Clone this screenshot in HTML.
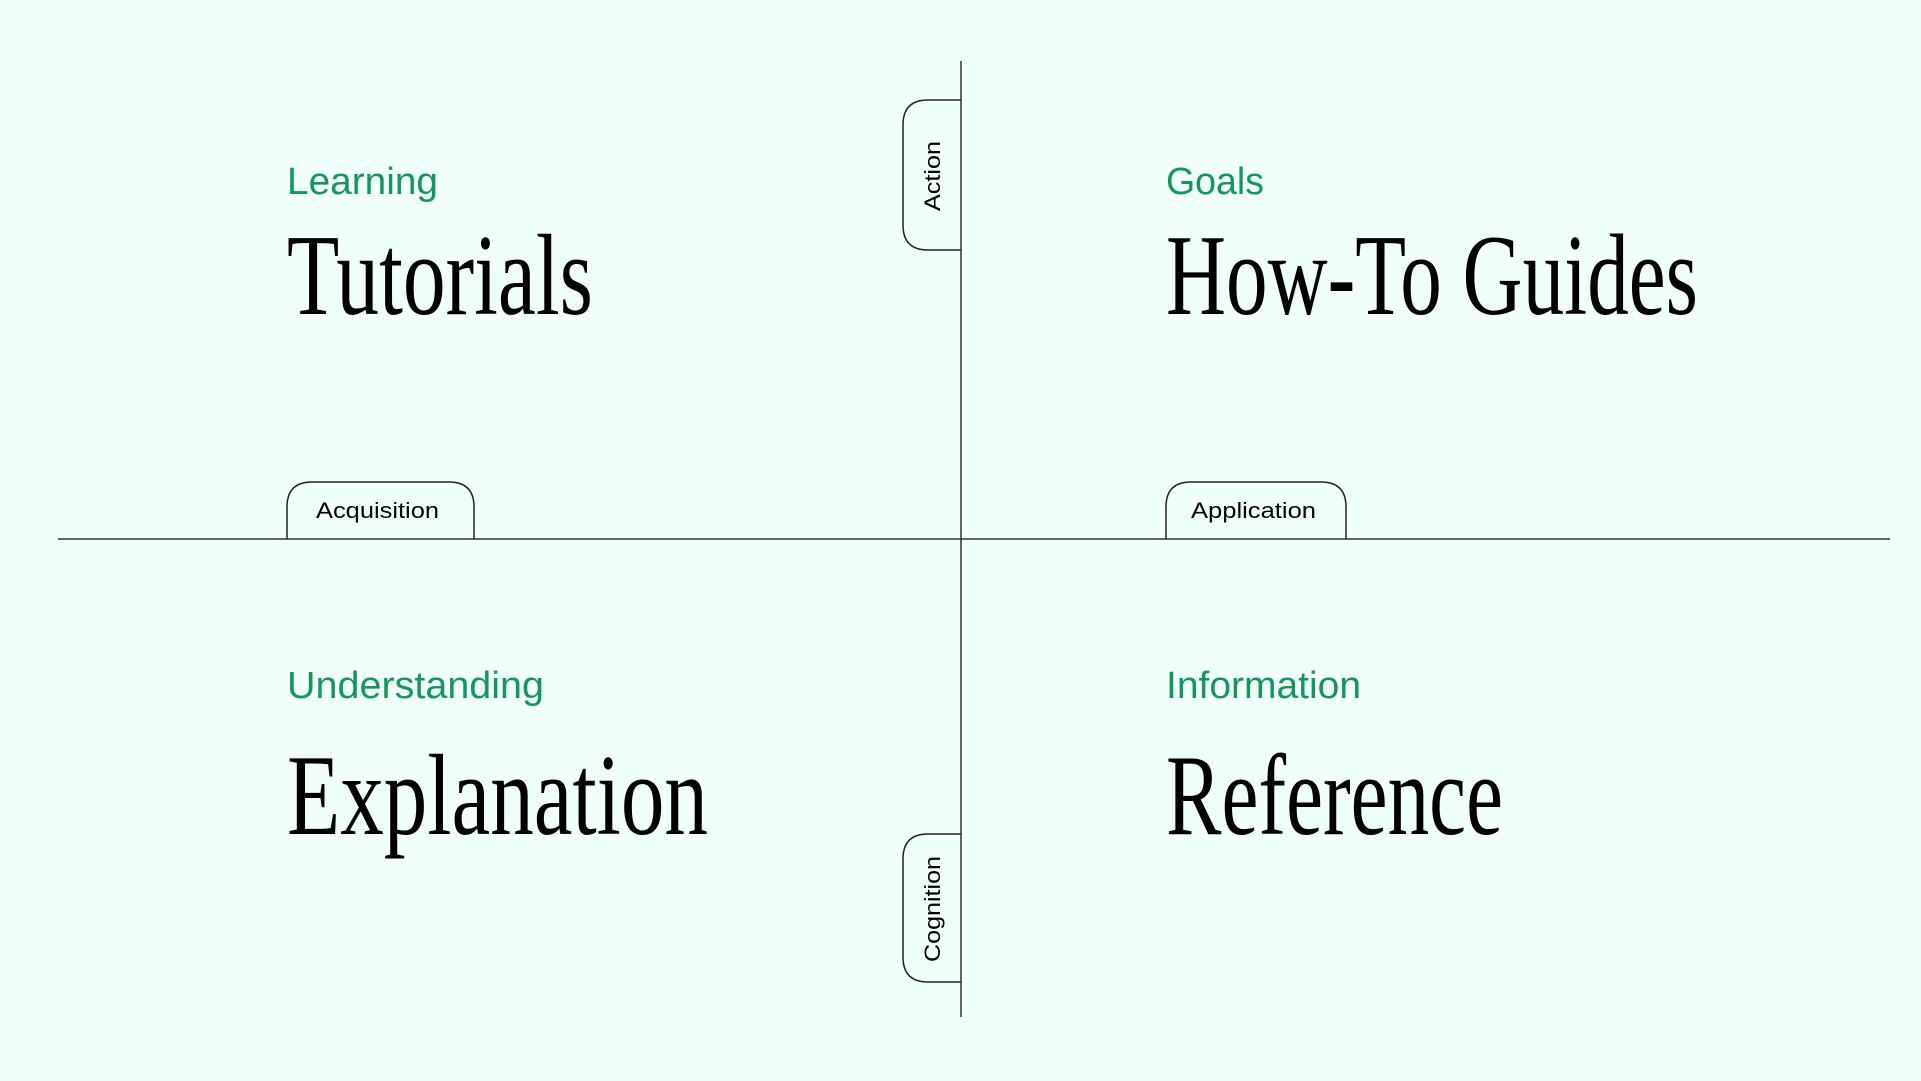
<!DOCTYPE html>
<html><head><meta charset="utf-8"><style>
html,body{margin:0;padding:0;background:#f0fff9;}
svg{display:block}
.g{font-family:"Liberation Sans",sans-serif;fill:#15965f;font-size:38px}
.s{font-family:"Liberation Serif",serif;fill:#000;font-size:116px}
.t{font-family:"Liberation Sans",sans-serif;fill:#000;font-size:22px}
</style></head><body>
<svg width="1921" height="1081" viewBox="0 0 1921 1081">
<rect width="1921" height="1081" fill="#f0fff9"/>
<line x1="961" y1="61" x2="961" y2="1017" stroke="#333" stroke-width="1.5"/>
<line x1="58" y1="539" x2="1890" y2="539" stroke="#333" stroke-width="1.5"/>
<g fill="none" stroke="#222" stroke-width="1.5">
<path d="M287 539 V507 Q287 482 312 482 H449 Q474 482 474 507 V539"/>
<path d="M1166 539 V507 Q1166 482 1191 482 H1321 Q1346 482 1346 507 V539"/>
<path d="M961 100 H928 Q903 100 903 125 V225 Q903 250 928 250 H961"/>
<path d="M961 834 H928 Q903 834 903 859 V957 Q903 982 928 982 H961"/>
</g>
<text class="t" x="316" y="518" textLength="123" lengthAdjust="spacingAndGlyphs">Acquisition</text>
<text class="t" x="1191" y="518" textLength="125" lengthAdjust="spacingAndGlyphs">Application</text>
<text class="t" transform="translate(940,211) rotate(-90)" textLength="70" lengthAdjust="spacingAndGlyphs">Action</text>
<text class="t" transform="translate(940,962) rotate(-90)" textLength="106" lengthAdjust="spacingAndGlyphs">Cognition</text>
<text class="g" x="287" y="194" textLength="151" lengthAdjust="spacingAndGlyphs">Learning</text>
<text class="g" x="1166" y="194" textLength="98" lengthAdjust="spacingAndGlyphs">Goals</text>
<text class="g" x="287" y="698" textLength="257" lengthAdjust="spacingAndGlyphs">Understanding</text>
<text class="g" x="1166" y="698" textLength="195" lengthAdjust="spacingAndGlyphs">Information</text>
<text class="s" x="287" y="314" textLength="306" lengthAdjust="spacingAndGlyphs">Tutorials</text>
<text class="s" x="1166" y="314" textLength="532" lengthAdjust="spacingAndGlyphs">How-To Guides</text>
<text class="s" x="287" y="834" textLength="421" lengthAdjust="spacingAndGlyphs">Explanation</text>
<text class="s" x="1166" y="834" textLength="337" lengthAdjust="spacingAndGlyphs">Reference</text>
</svg>
</body></html>
